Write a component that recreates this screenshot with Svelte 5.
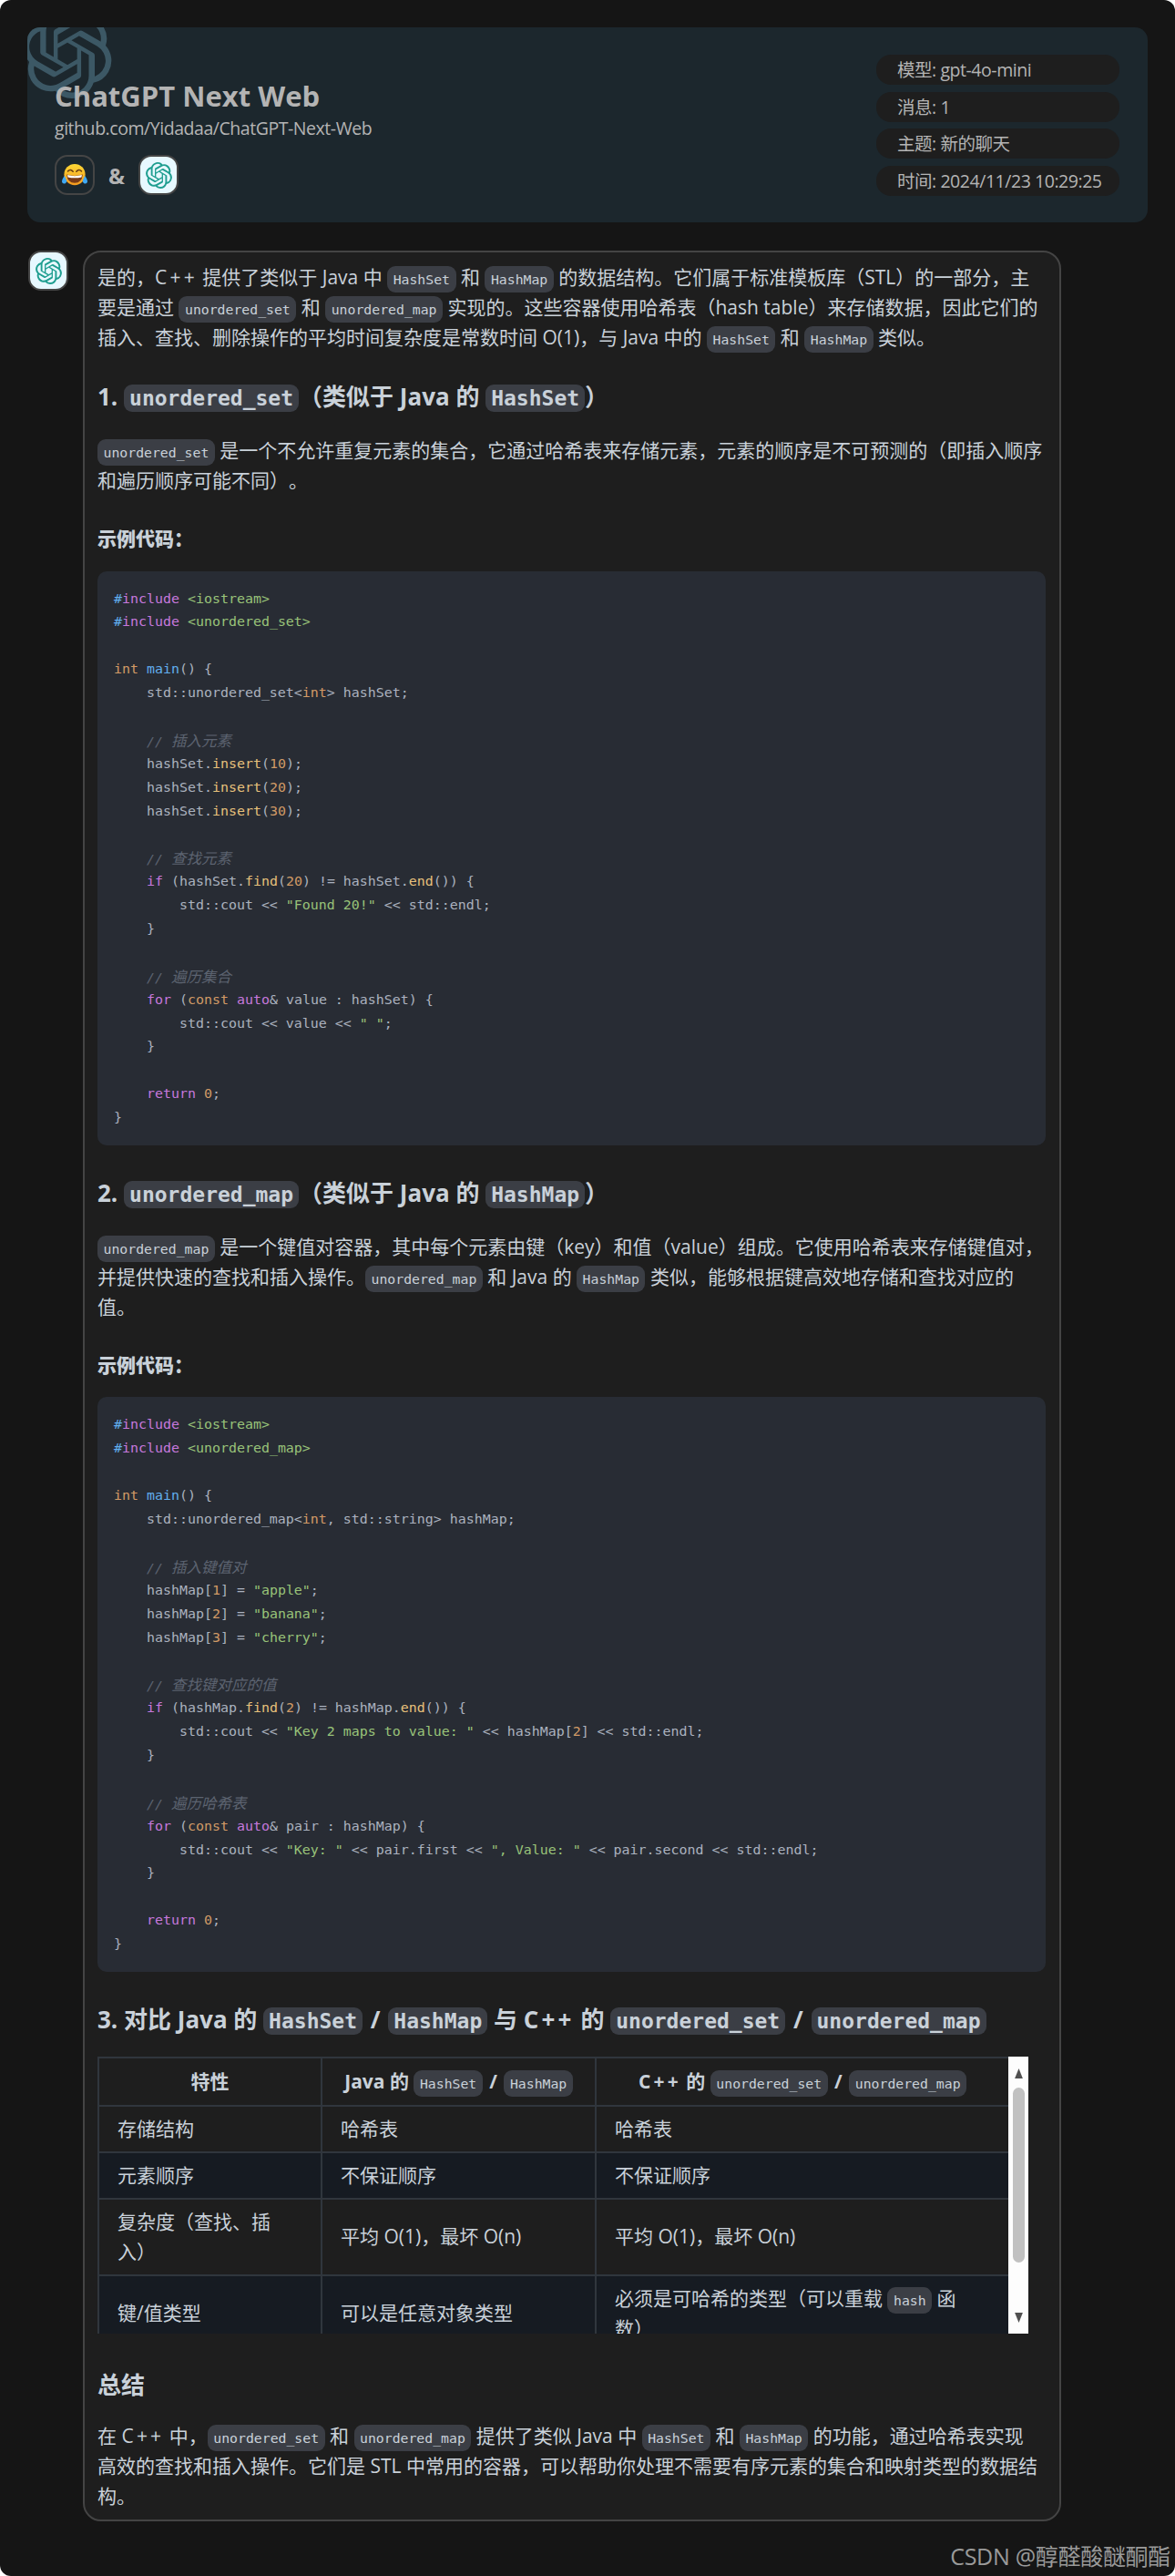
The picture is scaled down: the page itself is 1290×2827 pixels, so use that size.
<script lang="ts">
  type Tok = string | [string, string];

  const inc = (name: string): Tok[] => [['hash', '#'], ['kw', 'include'], ' ', ['str', name]];
  const note = (s: string): Tok[] => ['    ', ['com', '// '], ['cjk', s]];

  const setCode: Tok[][] = [
    inc('<iostream>'),
    inc('<unordered_set>'),
    [],
    [['num', 'int'], ' ', ['fn', 'main'], '() {'],
    ['    std::unordered_set<', ['num', 'int'], '> hashSet;'],
    [],
    note('插入元素'),
    ['    hashSet.', ['mem', 'insert'], '(', ['num', '10'], ');'],
    ['    hashSet.', ['mem', 'insert'], '(', ['num', '20'], ');'],
    ['    hashSet.', ['mem', 'insert'], '(', ['num', '30'], ');'],
    [],
    note('查找元素'),
    ['    ', ['kw', 'if'], ' (hashSet.', ['mem', 'find'], '(', ['num', '20'], ') != hashSet.', ['mem', 'end'], '()) {'],
    ['        std::cout << ', ['str', '"Found 20!"'], ' << std::endl;'],
    ['    }'],
    [],
    note('遍历集合'),
    ['    ', ['kw', 'for'], ' (', ['num', 'const'], ' ', ['kw', 'auto'], '& value : hashSet) {'],
    ['        std::cout << value << ', ['str', '" "'], ';'],
    ['    }'],
    [],
    ['    ', ['kw', 'return'], ' ', ['num', '0'], ';'],
    ['}'],
  ];

  const mapCode: Tok[][] = [
    inc('<iostream>'),
    inc('<unordered_map>'),
    [],
    [['num', 'int'], ' ', ['fn', 'main'], '() {'],
    ['    std::unordered_map<', ['num', 'int'], ', std::string> hashMap;'],
    [],
    note('插入键值对'),
    ['    hashMap[', ['num', '1'], '] = ', ['str', '"apple"'], ';'],
    ['    hashMap[', ['num', '2'], '] = ', ['str', '"banana"'], ';'],
    ['    hashMap[', ['num', '3'], '] = ', ['str', '"cherry"'], ';'],
    [],
    note('查找键对应的值'),
    ['    ', ['kw', 'if'], ' (hashMap.', ['mem', 'find'], '(', ['num', '2'], ') != hashMap.', ['mem', 'end'], '()) {'],
    ['        std::cout << ', ['str', '"Key 2 maps to value: "'], ' << hashMap[', ['num', '2'], '] << std::endl;'],
    ['    }'],
    [],
    note('遍历哈希表'),
    ['    ', ['kw', 'for'], ' (', ['num', 'const'], ' ', ['kw', 'auto'], '& pair : hashMap) {'],
    ['        std::cout << ', ['str', '"Key: "'], ' << pair.first << ', ['str', '", Value: "'], ' << pair.second << std::endl;'],
    ['    }'],
    [],
    ['    ', ['kw', 'return'], ' ', ['num', '0'], ';'],
    ['}'],
  ];

  const openai =
    'M22.2819 9.8211a5.9847 5.9847 0 0 0-.5157-4.9108 6.0462 6.0462 0 0 0-6.5098-2.9A6.0651 6.0651 0 0 0 4.9807 4.1818a5.9847 5.9847 0 0 0-3.9977 2.9 6.0462 6.0462 0 0 0 .7427 7.0966 5.98 5.98 0 0 0 .511 4.9107 6.051 6.051 0 0 0 6.5146 2.9001A5.9847 5.9847 0 0 0 13.2599 24a6.0557 6.0557 0 0 0 5.7718-4.2058 5.9894 5.9894 0 0 0 3.9977-2.9001 6.0557 6.0557 0 0 0-.7475-7.0729zm-9.022 12.6081a4.4755 4.4755 0 0 1-2.8764-1.0408l.1419-.0804 4.7783-2.7582a.7948.7948 0 0 0 .3927-.6813v-6.7369l2.02 1.1686a.071.071 0 0 1 .038.052v5.5826a4.504 4.504 0 0 1-4.4945 4.4944zm-9.6607-4.1254a4.4708 4.4708 0 0 1-.5346-3.0137l.142.0852 4.783 2.7582a.7712.7712 0 0 0 .7806 0l5.8428-3.3685v2.3324a.0804.0804 0 0 1-.0332.0615L9.74 19.9502a4.4992 4.4992 0 0 1-6.1408-1.6464zM2.3408 7.8956a4.485 4.485 0 0 1 2.3655-1.9728V11.6a.7664.7664 0 0 0 .3879.6765l5.8144 3.3543-2.0201 1.1685a.0757.0757 0 0 1-.071 0l-4.8303-2.7865A4.504 4.504 0 0 1 2.3408 7.872zm16.5963 3.8558L13.1038 8.364 15.1192 7.2a.0757.0757 0 0 1 .071 0l4.8303 2.7913a4.4944 4.4944 0 0 1-.6765 8.1042v-5.6772a.79.79 0 0 0-.407-.667zm2.0107-3.0231l-.142-.0852-4.7735-2.7818a.7759.7759 0 0 0-.7854 0L9.409 9.2297V6.8974a.0662.0662 0 0 1 .0284-.0615l4.8303-2.7866a4.4992 4.4992 0 0 1 6.6802 4.66zM8.3065 12.863l-2.02-1.1638a.0804.0804 0 0 1-.038-.0567V6.0742a4.4992 4.4992 0 0 1 7.3757-3.4537l-.142.0805L8.704 5.459a.7948.7948 0 0 0-.3927.6813zm1.0976-2.3654l2.602-1.4998 2.6069 1.4998v2.9994l-2.5974 1.4997-2.6067-1.4997Z';
</script>

{#snippet logo(cls: string)}
  <svg class={cls} viewBox="0 0 24 24" aria-hidden="true"><path d={openai} fill="currentColor" /></svg>
{/snippet}

{#snippet block(lines: Tok[][])}
  <pre class="code">{#each lines as line}<span class="line">{#each line as tk}{#if typeof tk === 'string'}{tk}{:else}<span class={tk[0]}>{tk[1]}</span>{/if}{/each}</span>{/each}</pre>
{/snippet}

<div class="page">
  <header class="head">
    {@render logo('mark')}
    <div class="brand">
      <h1>ChatGPT Next Web</h1>
      <div class="repo">github.com/Yidadaa/ChatGPT-Next-Web</div>
      <div class="who">
        <div class="avatar user">
          <svg viewBox="0 0 32 28" width="30" height="26" aria-hidden="true">
            <defs>
              <linearGradient id="face" x1="0" y1="0" x2="0" y2="1">
                <stop offset="0" stop-color="#fdd835" />
                <stop offset="1" stop-color="#f39a1f" />
              </linearGradient>
            </defs>
            <circle cx="16" cy="13.5" r="12.5" fill="url(#face)" />
            <path d="M8 9.5q3-3 6 .5M18 10q3-3.500 6-.5" fill="none" stroke="#6b3f12" stroke-width="1.700" stroke-linecap="round" />
            <path d="M6.500 13.500q9.500 3 19 0q-.8 10-9.500 10t-9.500-10z" fill="#7a3b16" />
            <path d="M7.500 14q8.500 2.500 17 0l-.4 2.600q-8.100 2-16.200 0z" fill="#fff" />
            <path d="M4 15q-3.500 4.500-3 7.500q1.500 2.500 4 1.500q2-1.500 1.500-3.500z" fill="#3fa9f5" />
            <path d="M28 15q3.500 4.500 3 7.500q-1.500 2.500-4 1.500q-2-1.500-1.500-3.500z" fill="#3fa9f5" />
          </svg>
        </div>
        <span class="amp">&amp;</span>
        <div class="avatar bot">{@render logo('glyph')}</div>
      </div>
    </div>
    <div class="info">
      <div class="pill">模型: gpt-4o-mini</div>
      <div class="pill">消息: 1</div>
      <div class="pill">主题: 新的聊天</div>
      <div class="pill">时间: 2024/11/23 10:29:25</div>
    </div>
  </header>

  <section class="chat">
    <div class="avatar bot">{@render logo('glyph')}</div>
    <article class="msg">
      <p>是的，<span class="cpp">C++</span> 提供了类似于 Java 中 <code>HashSet</code> 和 <code>HashMap</code> 的数据结构。它们属于标准模板库（STL）的一部分，主<br />要是通过 <code>unordered_set</code> 和 <code>unordered_map</code> 实现的。这些容器使用哈希表（hash table）来存储数据，因此它们的<br />插入、查找、删除操作的平均时间复杂度是常数时间 O(1)，与 Java 中的 <code>HashSet</code> 和 <code>HashMap</code> 类似。</p>

      <h3>1. <code>unordered_set</code>（类似于 Java 的 <code>HashSet</code>）</h3>
      <p><code>unordered_set</code> 是一个不允许重复元素的集合，它通过哈希表来存储元素，元素的顺序是不可预测的（即插入顺序<br />和遍历顺序可能不同）。</p>
      <p class="label"><strong>示例代码：</strong></p>
      {@render block(setCode)}

      <h3>2. <code>unordered_map</code>（类似于 Java 的 <code>HashMap</code>）</h3>
      <p><code>unordered_map</code> 是一个键值对容器，其中每个元素由键（key）和值（value）组成。它使用哈希表来存储键值对，<br />并提供快速的查找和插入操作。<code>unordered_map</code> 和 Java 的 <code>HashMap</code> 类似，能够根据键高效地存储和查找对应的<br />值。</p>
      <p class="label"><strong>示例代码：</strong></p>
      {@render block(mapCode)}

      <h3 class="cmp">3. 对比 Java 的 <code>HashSet</code> <span class="sl">/</span> <code>HashMap</code> 与 <span class="cpp">C++</span> 的 <code>unordered_set</code> <span class="sl">/</span> <code>unordered_map</code></h3>
      <div class="scroller">
        <div class="clip">
          <table>
            <colgroup><col class="c1" /><col class="c2" /><col class="c3" /></colgroup>
            <thead>
              <tr>
                <th>特性</th>
                <th>Java 的 <code>HashSet</code> <span class="sl">/</span> <code>HashMap</code></th>
                <th><span class="cpp">C++</span> 的 <code>unordered_set</code> <span class="sl">/</span> <code>unordered_map</code></th>
              </tr>
            </thead>
            <tbody>
              <tr><td>存储结构</td><td>哈希表</td><td>哈希表</td></tr>
              <tr><td>元素顺序</td><td>不保证顺序</td><td>不保证顺序</td></tr>
              <tr><td>复杂度（查找、插<br />入）</td><td>平均 O(1)，最坏 O(n)</td><td>平均 O(1)，最坏 O(n)</td></tr>
              <tr><td>键/值类型</td><td>可以是任意对象类型</td><td>必须是可哈希的类型（可以重载 <code>hash</code> 函<br />数）</td></tr>
            </tbody>
          </table>
        </div>
        <div class="bar">
          <svg viewBox="0 0 10 10" aria-hidden="true"><path d="M5 0l4 10H1z" fill="currentColor" /></svg>
          <div class="thumb"></div>
          <svg viewBox="0 0 10 10" aria-hidden="true"><path d="M1 0h8L5 10z" fill="currentColor" /></svg>
        </div>
      </div>

      <h3 class="sum">总结</h3>
      <p class="last">在 <span class="cpp">C++</span> 中，<code>unordered_set</code> 和 <code>unordered_map</code> 提供了类似 Java 中 <code>HashSet</code> 和 <code>HashMap</code> 的功能，通过哈希表实现<br />高效的查找和插入操作。它们是 STL 中常用的容器，可以帮助你处理不需要有序元素的集合和映射类型的数据结<br />构。</p>
    </article>
  </section>

  <div class="stamp">CSDN @醇醛酸醚酮酯</div>
</div>

<style>
  :global(body) {
    background: #fff;
  }

  .page {
    position: relative;
    width: 1290px;
    height: 2827px;
    overflow: hidden;
    box-sizing: border-box;
    padding-top: 30px;
    border-radius: 12px;
    background: #151515;
    color: #c9d1d9;
    font-family: 'Open Sans', 'Noto Sans CJK SC', sans-serif;
    font-size: 21px;
    text-spacing-trim: space-all;
    text-autospace: no-autospace;
  }

  .head {
    position: relative;
    display: flex;
    justify-content: space-between;
    height: 214px;
    box-sizing: border-box;
    margin: 0 30px;
    padding: 30px 31px 30px 30px;
    overflow: hidden;
    border-radius: 14px;
    background: #1c272d;
  }

  :global(.mark) {
    position: absolute;
    top: -20px;
    left: -5px;
    width: 98px;
    height: 98px;
    color: #3c5865;
  }

  .brand {
    position: relative;
    color: #b4b4b4;
  }

  h1 {
    margin: 24px 0 0;
    font-size: 31px;
    font-weight: 700;
    line-height: 42px;
  }

  .repo {
    margin-top: 1px;
    font-size: 19.5px;
    letter-spacing: -0.45px;
    line-height: 28px;
  }

  .who {
    display: flex;
    align-items: center;
    margin-top: 15px;
  }

  .avatar {
    display: flex;
    align-items: center;
    justify-content: center;
    flex: none;
    width: 44px;
    height: 44px;
    box-sizing: border-box;
    border: 2px solid #454545;
    border-radius: 14px;
  }

  .bot {
    background: #e7f8ff;
    color: #1f9e90;
  }

  :global(.glyph) {
    width: 29px;
    height: 29px;
  }

  .amp {
    margin: 0 15px;
    font-size: 24px;
    font-weight: 700;
  }

  .info {
    display: flex;
    flex-direction: column;
    gap: 7.5px;
    width: 267px;
  }

  .pill {
    height: 33px;
    padding-left: 23px;
    border-radius: 16px;
    background: #1e1e1e;
    color: #b4b4b4;
    font-size: 19.5px;
    letter-spacing: -0.45px;
    line-height: 33px;
    white-space: nowrap;
  }

  .chat {
    display: flex;
    align-items: flex-start;
    gap: 15.5px;
    margin: 31px 0 0 31px;
  }

  .msg {
    width: 1074px;
    height: 2492px;
    box-sizing: border-box;
    padding: 11px 14.5px 0 14.5px;
    border: 2px solid #444;
    border-radius: 20px;
    background: #1e1e1e;
    line-height: 33px;
    white-space: nowrap;
  }

  p {
    margin: 0 0 25px;
  }

  h3 {
    margin: 32px 0 26px;
    font-size: 26px;
    font-weight: 700;
    line-height: 33px;
  }

  code {
    padding: 5.800px 6.500px;
    border-radius: 9px;
    background: #3b3e45;
    font-family: 'DejaVu Sans Mono', monospace;
    font-size: 14.800px;
    font-weight: 400;
    line-height: 1;
  }

  h3 code {
    padding: 1.600px 6px;
    font-size: 23px;
    font-weight: 700;
  }

  .cpp {
    letter-spacing: 3.200px;
  }

  .sl {
    margin: 0 2px;
  }

  .label {
    margin: 31px 0 18.500px;
    font-weight: 700;
  }

  .code {
    margin: 0;
    padding: 18px 18px 17px;
    border-radius: 10px;
    background: #282c34;
    color: #abb2bf;
    font-family: 'DejaVu Sans Mono', 'Noto Sans CJK SC', monospace;
    font-size: 14.950px;
  }

  .line {
    display: block;
    height: 25.900px;
    line-height: 25.900px;
  }

  .code :global(.hash) { color: #61aeee; }
  .code :global(.kw) { color: #c678dd; }
  .code :global(.str) { color: #98c379; }
  .code :global(.num) { color: #d19a66; }
  .code :global(.fn) { color: #61aeee; }
  .code :global(.mem) { color: #e6c07b; }
  .code :global(.com) { color: #5c6370; font-style: italic; }
  .code :global(.cjk) {
    color: #5c6370;
    font-family: 'Noto Sans CJK SC', sans-serif;
    font-size: 16.500px;
    font-style: italic;
  }

  .code + h3 {
    margin-top: 36px;
  }

  h3.cmp {
    margin-bottom: 24px;
  }

  .scroller {
    display: flex;
    width: 1022px;
    height: 304px;
    margin-bottom: 40px;
  }

  .clip {
    flex: 1;
    overflow: hidden;
  }

  table {
    width: 1000px;
    table-layout: fixed;
    border-collapse: collapse;
  }

  .c1 { width: 245px; }
  .c2 { width: 301px; }
  .c3 { width: 454px; }

  th,
  td {
    padding: 8px 20px;
    border: 2px solid #30363d;
  }

  th {
    height: 35px;
    font-weight: 700;
    text-align: center;
  }

  tbody tr:nth-child(even) {
    background: #161b22;
  }

  .bar {
    display: flex;
    flex-direction: column;
    align-items: center;
    flex: none;
    width: 22px;
    background: #fdfdfd;
    color: #505050;
  }

  .bar svg {
    flex: none;
    width: 13px;
    height: 11px;
    margin: 13px 0 10px;
  }

  .bar svg:last-child {
    margin: auto 0 12px;
  }

  .thumb {
    width: 13px;
    height: 192px;
    border-radius: 7px;
    background: #c1c1c1;
  }

  h3.sum {
    margin: 0 0 23px;
  }

  .last {
    margin: 0;
  }

  .stamp {
    position: absolute;
    right: 5px;
    bottom: 5px;
    color: #9a9a9a;
    font-size: 25px;
    letter-spacing: -0.3px;
    line-height: 34px;
  }
</style>
